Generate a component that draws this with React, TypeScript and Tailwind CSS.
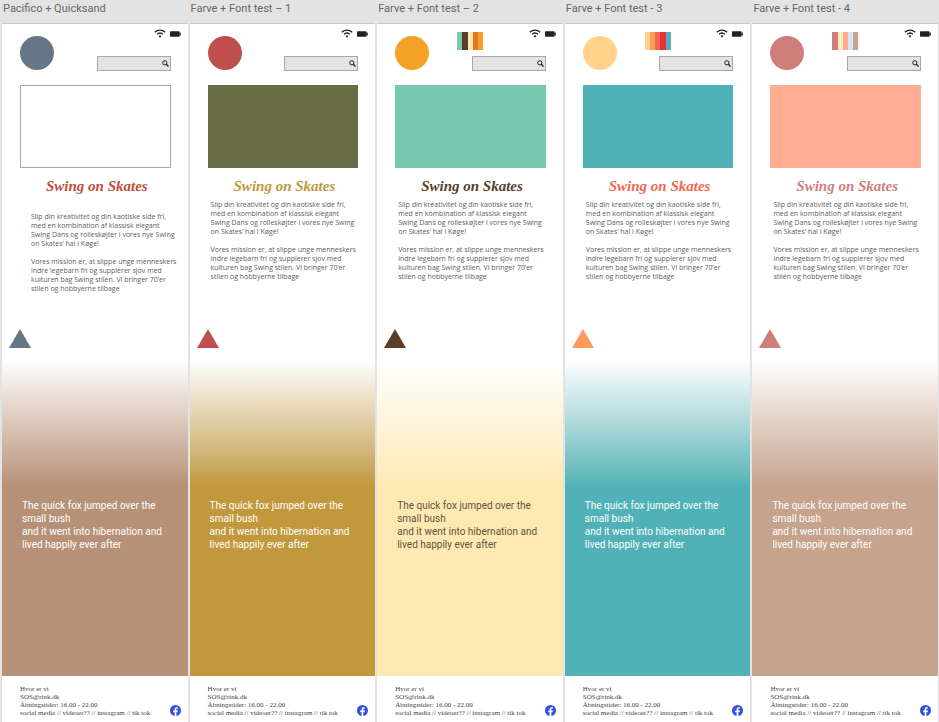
import React from "react";

type Theme = {
  name: string;
  first?: boolean;
  circle: string;
  hero: string;
  title: string;
  triangle: string;
  gradient: string;
  band: string;
  quote: string;
  palette?: string[];
};

const themes: Theme[] = [
  {
    name: "Pacifico + Quicksand",
    first: true,
    circle: "bg-[#657687]",
    hero: "border border-[#a8a8a8] bg-white",
    title: "text-[#c14d3a]",
    triangle: "fill-[#657687]",
    gradient: "to-[#b79177]",
    band: "bg-[#b79177]",
    quote: "text-white",
  },
  {
    name: "Farve + Font test – 1",
    circle: "bg-[#bf4e4e]",
    hero: "bg-[#6b6d45]",
    title: "text-[#c1983c]",
    triangle: "fill-[#bf4e4e]",
    gradient: "to-[#c1983c]",
    band: "bg-[#c1983c]",
    quote: "text-white",
  },
  {
    name: "Farve + Font test – 2",
    circle: "bg-[#f4a127]",
    hero: "bg-[#76c8ae]",
    title: "text-[#5a3d2b]",
    triangle: "fill-[#5a3d2b]",
    gradient: "to-[#ffe9b3]",
    band: "bg-[#ffe9b3]",
    quote: "text-[#5e5340]",
    palette: ["bg-[#76c8ae]", "bg-[#5a3d2b]", "bg-[#ffe9b3]", "bg-[#e5771e]", "bg-[#f4a127]"],
  },
  {
    name: "Farve + Font test - 3",
    circle: "bg-[#ffd38b]",
    hero: "bg-[#50b2b6]",
    title: "text-[#f5674d]",
    triangle: "fill-[#ff9b5c]",
    gradient: "to-[#50b2b6]",
    band: "bg-[#50b2b6]",
    quote: "text-white",
    palette: ["bg-[#ffd38b]", "bg-[#ff9b5c]", "bg-[#f5674d]", "bg-[#ea2e3c]", "bg-[#50b2b6]"],
  },
  {
    name: "Farve + Font test - 4",
    circle: "bg-[#cf7e7b]",
    hero: "bg-[#ffae93]",
    title: "text-[#cf7e7b]",
    triangle: "fill-[#cf7e7b]",
    gradient: "to-[#c5a38d]",
    band: "bg-[#c5a38d]",
    quote: "text-white",
    palette: ["bg-[#cf7e7b]", "bg-[#ffedbd]", "bg-[#ffae93]", "bg-[#d3e5f7]", "bg-[#c5a38d]"],
  },
];

function WifiIcon() {
  return (
    <svg viewBox="0 0 12 9" className="h-[9px] w-3" fill="none" stroke="#222" strokeWidth="1.3" aria-hidden="true">
      <path d="M0.8 3.2C3.8 0.3 8.2 0.3 11.2 3.2" />
      <path d="M3 5.3C4.8 3.7 7.2 3.7 9 5.3" />
      <circle cx="6" cy="7.3" r="1.1" fill="#222" stroke="none" />
    </svg>
  );
}

function BatteryIcon() {
  return (
    <svg viewBox="0 0 11 6" className="h-[6px] w-[11px]" fill="#222" aria-hidden="true">
      <rect x="0" y="0.3" width="9.6" height="5.4" rx="0.6" />
      <rect x="9.4" y="1.6" width="1.4" height="2.8" rx="0.5" />
    </svg>
  );
}

function SearchIcon() {
  return (
    <svg viewBox="0 0 7 7" className="h-[7px] w-[7px]" fill="none" stroke="#222" aria-hidden="true">
      <circle cx="2.8" cy="2.8" r="2.1" strokeWidth="1" />
      <path d="M4.3 4.3L6.5 6.5" strokeWidth="1.3" />
    </svg>
  );
}

function FacebookIcon() {
  return (
    <svg viewBox="0 0 24 24" className="h-[11px] w-[11px]" aria-hidden="true">
      <circle cx="12" cy="12" r="12" fill="#3350e0" />
      <path
        fill="#fff"
        d="M10.1 24v-8.4H7v-3.5h3.1V9.4c0-3 1.8-4.7 4.6-4.7 1.3 0 2.6.2 2.6.2v2.9h-1.5c-1.5 0-2 .9-2 1.9v2.4h3.4l-.5 3.5h-2.9V24z"
      />
    </svg>
  );
}

function Palette({ colors }: { colors: string[] }) {
  return (
    <div className="flex h-[18px] w-[26px]">
      {colors.map((c) => (
        <span key={c} className={`flex-1 ${c}`} />
      ))}
    </div>
  );
}

function Artboard({ theme }: { theme: Theme }) {
  return (
    <section className="flex min-w-0 flex-col">
      <h2 className="h-6 truncate border-b border-[#c8c8c8] pl-px font-['Roboto',sans-serif] text-[11px] leading-[18px] text-[#666]">
        {theme.name}
      </h2>
      <div className="flex flex-col bg-white">
        <header className="flex h-[61px] items-start pr-[17px] pl-[18px]">
          <div className={`mt-3 h-[34px] w-[34px] rounded-full ${theme.circle}`} />
          <div className="flex flex-1 flex-col">
            <div className="flex h-8 items-start justify-between pl-7">
              <div className="pt-2">{theme.palette && <Palette colors={theme.palette} />}</div>
              <div className="-mr-[10px] flex items-center gap-1 pt-[5px]">
                <WifiIcon />
                <BatteryIcon />
              </div>
            </div>
            <form
              className="flex h-[15px] w-[74px] items-center self-end border border-[#a8a8a8] bg-[#e3e3e3] pr-px"
              onSubmit={(e) => e.preventDefault()}
            >
              <input
                type="text"
                aria-label="Søg"
                className="h-full min-w-0 flex-1 bg-transparent px-1 text-[8px] outline-none"
              />
              <button type="submit" aria-label="Søg">
                <SearchIcon />
              </button>
            </form>
          </div>
        </header>
        <div className={`mr-[17px] ml-[18px] h-[83px] ${theme.hero}`} />
        <h1
          className={`mt-1 h-7 pl-1 text-center font-['Liberation_Serif',serif] text-[15px] leading-7 font-bold italic ${theme.title}`}
        >
          Swing on Skates
        </h1>
        <div
          className={`h-[133px] font-['Open_Sans',sans-serif] text-[7px] leading-[9px] whitespace-nowrap text-[#606060] ${
            theme.first ? "pt-3 pl-[29px]" : "pl-[21px]"
          }`}
        >
          <p>
            Slip din kreativitet og din kaotiske side fri,<br />
            med en kombination af klassisk elegant<br />
            Swing Dans og rolleskøjter i vores nye Swing<br />
            on Skates’ hal i Køge!
          </p>
          <p className="mt-[9px]">
            Vores mission er, at slippe unge menneskers<br />
            indre legebarn fri og supplerer sjov med<br />
            kulturen bag Swing stilen. Vi bringer 70’er<br />
            stilen og hobbyerne tilbage
          </p>
        </div>
        <svg viewBox="0 0 22 19" className={`-mt-1 ml-[7px] h-[19px] w-[22px] ${theme.triangle}`} aria-hidden="true">
          <path d="M11 0L22 19H0z" />
        </svg>
        <div className={`mt-3 h-[127px] bg-linear-to-b from-white ${theme.gradient}`} />
        <div
          className={`h-[189px] pt-3 pl-5 font-['Roboto',sans-serif] text-[10px] leading-[13px] whitespace-nowrap ${theme.band} ${theme.quote}`}
        >
          <p>
            The quick fox jumped over the<br />
            small bush
          </p>
          <p>
            and it went into hibernation and<br />
            lived happily ever after
          </p>
        </div>
        <footer className="flex h-[46px] items-end justify-between pr-[7px] pb-[5px] pl-[18px]">
          <address className="font-['Liberation_Serif',serif] text-[7px] leading-[8px] whitespace-nowrap text-[#444] not-italic">
            Hvor er vi<br />
            SOS@rink.dk<br />
            Åbningstider: 16.00 - 22.00<br />
            social media // videoer?? // instagram // tik tok
          </address>
          <a href="#facebook" aria-label="Facebook" className="mb-px">
            <FacebookIcon />
          </a>
        </footer>
      </div>
    </section>
  );
}

export default function App() {
  return (
    <main className="grid grid-cols-5 gap-x-0.5 bg-[#e3e3e3] pr-px pl-0.5">
      {themes.map((t) => (
        <Artboard key={t.name} theme={t} />
      ))}
    </main>
  );
}
